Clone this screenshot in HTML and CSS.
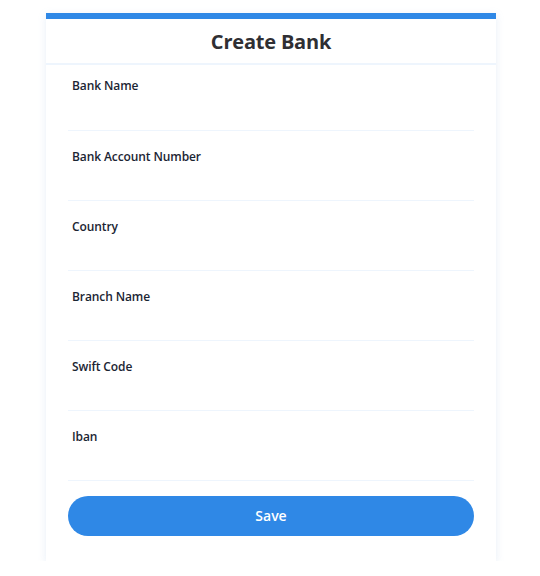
FILE: index.html
```html
<!DOCTYPE html>
<html>
<head>
<meta charset="utf-8">
<link rel="stylesheet" href="styles.css">
</head>
<body>
<div class="card">
  <div class="card-head">
    <h1 class="title">Create Bank</h1>
  </div>
  <form class="form">
    <div class="field"><label class="label">Bank Name</label><div class="input"></div></div>
    <div class="field"><label class="label">Bank Account Number</label><div class="input"></div></div>
    <div class="field"><label class="label">Country</label><div class="input"></div></div>
    <div class="field"><label class="label">Branch Name</label><div class="input"></div></div>
    <div class="field"><label class="label">Swift Code</label><div class="input"></div></div>
    <div class="field"><label class="label">Iban</label><div class="input"></div></div>
    <button type="button" class="btn">Save</button>
  </form>
</div>
</body>
</html>
```
FILE: styles.css
```css
html, body {
  margin: 0;
  padding: 0;
  background: #ffffff;
}
body {
  font-family: "Open Sans", "Noto Sans", sans-serif;
  padding-top: 13px;
}
.card {
  width: 450px;
  margin-left: 46px;
  background: #fff;
  border-top: 6px solid #2f88e6;
  box-shadow: 0 2px 8px rgba(120, 160, 210, 0.18);
}
.card-head {
  height: 44px;
  display: flex;
  align-items: center;
  justify-content: center;
  border-bottom: 2px solid #eef5fd;
}
.title {
  margin: 0;
  font-size: 20px;
  font-weight: 700;
  color: #2f2f33;
  letter-spacing: -0.2px;
}
.form {
  padding: 0 22px 25px;
  display: flex;
  flex-direction: column;
}
.field {
  display: flex;
  flex-direction: column;
  height: 51px;
  padding-top: 18px;
  border-bottom: 1px solid #eef5fd;
}
.field:first-child {
  height: 52px;
  padding-top: 13px;
}
.label {
  padding-left: 4px;
  font-size: 12px;
  line-height: 16px;
  font-weight: 600;
  color: #1b2533;
  letter-spacing: -0.1px;
}
.btn {
  margin-top: 15px;
  height: 40px;
  padding: 0 0 2px;
  border: none;
  border-radius: 20px;
  background: #2f88e6;
  color: #fff;
  font-family: inherit;
  font-size: 14px;
  font-weight: 600;
}
```
